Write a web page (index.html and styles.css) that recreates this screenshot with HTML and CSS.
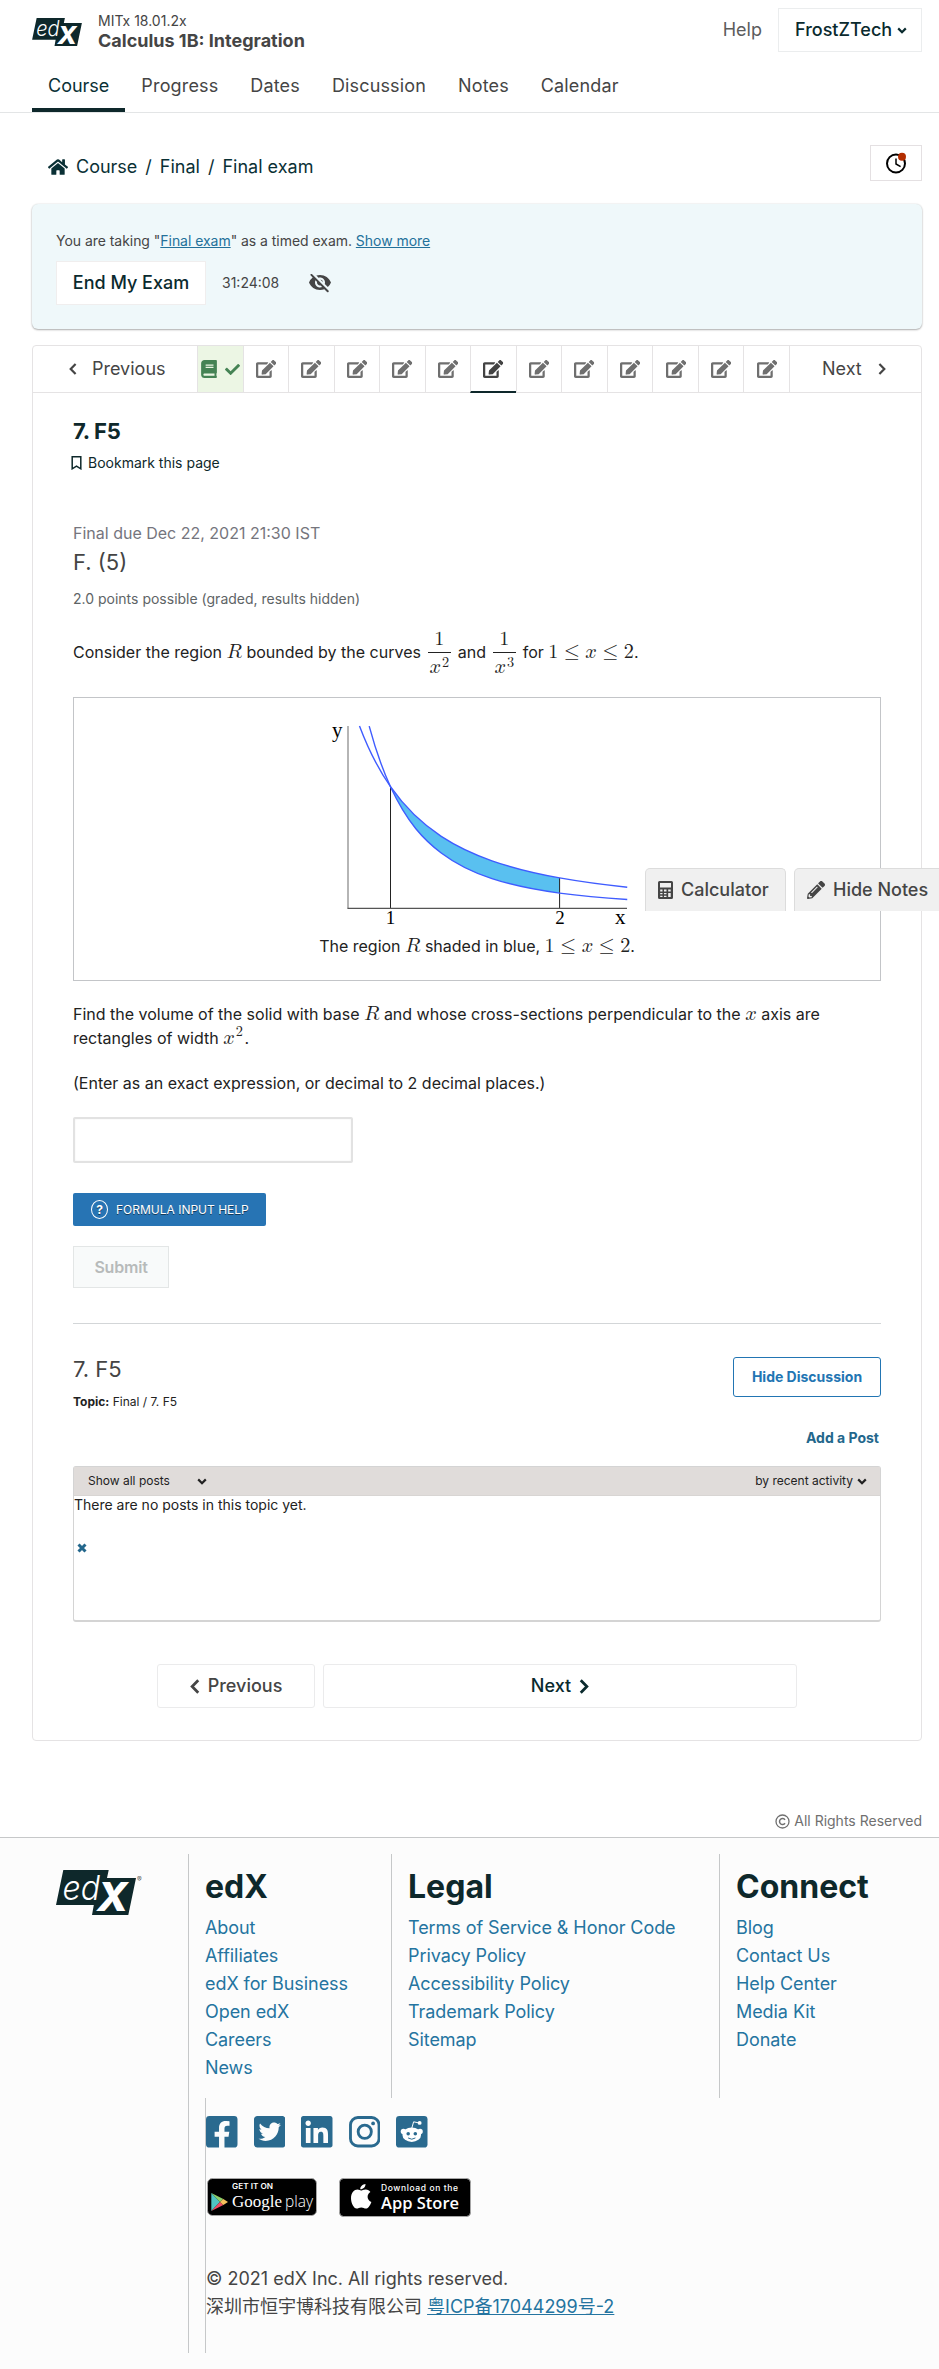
FILE: index.html
```html
<!DOCTYPE html>
<html lang="en">
<head>
<meta charset="utf-8">
<title>7. F5 | Calculus 1B: Integration | edX</title>
<link rel="stylesheet" href="styles.css">
</head>
<body>
<svg class="defs" width="0" height="0" aria-hidden="true">
  <symbol id="edit" viewBox="0 0 576 512"><path d="M402.6 83.2l90.2 90.2c3.8 3.8 3.8 10 0 13.8L274.4 405.6l-92.8 10.3c-12.4 1.4-22.9-9.1-21.5-21.5l10.3-92.8L388.8 83.2c3.8-3.8 10-3.8 13.8 0zm162-22.9l-48.8-48.8c-15.2-15.2-39.9-15.2-55.2 0l-35.4 35.4c-3.8 3.8-3.8 10 0 13.8l90.2 90.2c3.8 3.8 10 3.8 13.8 0l35.4-35.4c15.2-15.3 15.2-40 0-55.2zM384 346.2V448H64V128h229.8c3.2 0 6.2-1.3 8.5-3.5l40-40c7.6-7.6 2.2-20.5-8.5-20.5H48C21.5 64 0 85.5 0 112v352c0 26.5 21.5 48 48 48h352c26.5 0 48-21.5 48-48V306.2c0-10.7-12.9-16-20.5-8.5l-40 40c-2.2 2.3-3.5 5.3-3.5 8.5z"/></symbol>
  <symbol id="chev-left" viewBox="0 0 8 12"><path class="stroke" d="M6.6 1 1.7 6l4.9 5"/></symbol>
  <symbol id="chev-right" viewBox="0 0 8 12"><path class="stroke" d="M1.4 1 6.3 6l-4.9 5"/></symbol>
  <symbol id="chev-down" viewBox="0 0 10 7"><path class="stroke" d="M1.2 1.4 5 5.2l3.8-3.8"/></symbol>
</svg>

<header class="header">
  <div class="topbar">
    <svg class="logo" width="50" height="28" viewBox="0 0 80 45">
      <path class="logo-bg" d="M7.3 0H52.7L51 8H80L72.3 45H36L37.8 35H0Z"/>
      <text class="logo-ed" x="6.5" y="29.7" textLength="37.5" lengthAdjust="spacingAndGlyphs">ed</text>
      <text class="logo-x" x="41" y="41" textLength="31" lengthAdjust="spacingAndGlyphs">X</text>
    </svg>
    <div class="course">
      <div class="org">MITx 18.01.2x</div>
      <div class="title">Calculus 1B: Integration</div>
    </div>
    <a class="help">Help</a>
    <button class="user">FrostZTech <svg class="ic" width="10" height="7"><use href="#chev-down"/></svg></button>
  </div>
  <nav class="tabs">
    <a class="tab active">Course</a><a class="tab">Progress</a><a class="tab">Dates</a><a class="tab">Discussion</a><a class="tab">Notes</a><a class="tab">Calendar</a>
  </nav>
</header>

<main class="main">
  <div class="crumb-row">
    <div class="crumbs">
      <svg class="ic" width="20" height="18" viewBox="0 0 576 512"><path d="M280.37 148.26L96 300.11V464a16 16 0 0 0 16 16l112.06-.29a16 16 0 0 0 15.92-16V368a16 16 0 0 1 16-16h64a16 16 0 0 1 16 16v95.64a16 16 0 0 0 16 16.05L464 480a16 16 0 0 0 16-16V300L295.67 148.26a12.19 12.19 0 0 0-15.3 0zM571.6 251.47L488 182.56V44.05a12 12 0 0 0-12-12h-56a12 12 0 0 0-12 12v72.61L318.47 43a48 48 0 0 0-61 0L4.34 251.47a12 12 0 0 0-1.6 16.9l25.5 31A12 12 0 0 0 45.15 301l235.22-193.74a12.19 12.19 0 0 1 15.3 0L530.9 301a12 12 0 0 0 16.9-1.6l25.5-31a12 12 0 0 0-1.7-16.93z"/></svg>
      <a>Course</a><span>/</span><a>Final</a><span>/</span><a>Final exam</a>
    </div>
    <button class="clock"><svg width="24" height="24" viewBox="0 0 24 24"><circle cx="12" cy="12.5" r="9" fill="none" stroke="#000" stroke-width="2"/><path d="M12 7.5v5.5l4.6 2.7" fill="none" stroke="#000" stroke-width="1.5"/><circle cx="18" cy="5.7" r="4" fill="#b32d00"/></svg></button>
  </div>

  <section class="alert">
    <div class="alert-text">You are taking "<a>Final exam</a>" as a timed exam. <a>Show more</a></div>
    <div class="alert-row">
      <button class="end">End My Exam</button>
      <span class="timer">31:24:08</span>
      <svg class="eye" width="22" height="19" viewBox="1 3 22 19"><path d="M12 6.5c2.76 0 5 2.24 5 5 0 .51-.1 1-.24 1.46l3.06 3.06c1.39-1.23 2.49-2.77 3.18-4.53C21.27 7.11 17 4 12 4c-1.27 0-2.49.2-3.64.57l2.17 2.17c.47-.14.96-.24 1.47-.24zM2.71 3.16a.996.996 0 000 1.41l1.97 1.97A11.892 11.892 0 001 11.5C2.73 15.89 7 19 12 19c1.52 0 2.97-.3 4.31-.82l2.72 2.72a.996.996 0 101.41-1.41L4.13 3.16c-.39-.39-1.03-.39-1.42 0zM12 16.5c-2.76 0-5-2.24-5-5 0-.77.18-1.5.49-2.14l1.57 1.57c-.03.18-.06.37-.06.57 0 1.66 1.34 3 3 3 .2 0 .38-.03.57-.07L14.14 16c-.65.32-1.37.5-2.14.5zm2.97-5.33a2.97 2.97 0 00-2.64-2.64l2.64 2.64z"/></svg>
    </div>
  </section>

  <section class="card">
    <nav class="seq">
      <a class="seq-prev"><svg class="ic" width="8" height="12"><use href="#chev-left"/></svg><span>Previous</span></a>
      <div class="seq-tabs">
        <a class="done"><svg width="16" height="18" viewBox="0 0 448 512"><path d="M448 360V24c0-13.3-10.7-24-24-24H96C43 0 0 43 0 96v320c0 53 43 96 96 96h328c13.3 0 24-10.7 24-24v-16c0-7.5-3.5-14.3-8.9-18.7-4.2-15.4-4.2-59.3 0-74.7 5.4-4.3 8.9-11.1 8.9-18.6zM128 134c0-3.3 2.7-6 6-6h212c3.3 0 6 2.7 6 6v20c0 3.3-2.7 6-6 6H134c-3.3 0-6-2.7-6-6v-20zm0 64c0-3.3 2.7-6 6-6h212c3.3 0 6 2.7 6 6v20c0 3.3-2.7 6-6 6H134c-3.3 0-6-2.7-6-6v-20zm253.4 250H96c-17.7 0-32-14.3-32-32 0-17.6 14.4-32 32-32h285.4c-1.9 17.1-1.9 46.9 0 64z"/></svg><svg width="15" height="15" viewBox="0 0 512 512"><path d="M173.9 439.4l-166.4-166.4c-10-10-10-26.2 0-36.2l36.2-36.2c10-10 26.2-10 36.2 0L192 312.7 432.1 72.6c10-10 26.2-10 36.2 0l36.2 36.2c10 10 10 26.2 0 36.2l-294.4 294.4c-10 10-26.2 10-36.2 0z"/></svg></a>
        <a><svg class="e"><use href="#edit"/></svg></a><a><svg class="e"><use href="#edit"/></svg></a><a><svg class="e"><use href="#edit"/></svg></a><a><svg class="e"><use href="#edit"/></svg></a><a><svg class="e"><use href="#edit"/></svg></a><a class="current"><svg class="e"><use href="#edit"/></svg></a><a><svg class="e"><use href="#edit"/></svg></a><a><svg class="e"><use href="#edit"/></svg></a><a><svg class="e"><use href="#edit"/></svg></a><a><svg class="e"><use href="#edit"/></svg></a><a><svg class="e"><use href="#edit"/></svg></a><a><svg class="e"><use href="#edit"/></svg></a>
      </div>
      <a class="seq-next"><span>Next</span><svg class="ic" width="8" height="12"><use href="#chev-right"/></svg></a>
    </nav>

    <div class="content">
      <h1 class="unit">7. F5</h1>
      <a class="bookmark"><svg width="11" height="14" viewBox="0 0 11 14"><path d="M1.2.8h8.6v12L5.5 10.2 1.2 12.8z" fill="none" stroke="currentColor" stroke-width="1.5"/></svg>Bookmark this page</a>

      <div class="due">Final due Dec 22, 2021 21:30 IST</div>
      <h3 class="problem">F. (5)</h3>
      <div class="points">2.0 points possible (graded, results hidden)</div>
      <p class="statement">Consider the region <span class="m">𝑅</span> bounded by the curves <span class="frac"><span class="num"><span class="m">1</span></span><span class="den"><span class="m">𝑥</span><span class="m sup">2</span></span></span> and <span class="frac"><span class="num"><span class="m">1</span></span><span class="den"><span class="m">𝑥</span><span class="m sup">3</span></span></span> for <span class="m">1<i class="rel">≤</i>𝑥<i class="rel">≤</i>2</span>.</p>

      <div class="figure">
        <svg class="graph" width="300" height="200" viewBox="0 0 300 200">
          <!-- Curves are in plot units: one unit is 169.1 by 121.6 px -->
          <g transform="matrix(169.1 0 0 -121.6 -105.6 182.3)">
            <path fill="#59c0f0" d="M1 1C1.1 .8 1.2 .6827 1.3 .5917C1.4 .5007 1.5 .4394 1.6 .3906C1.7333 .3255 1.8667 .2833 2 .25V.125C1.8667 .15 1.7333 .1831 1.6 .2441C1.5 .2899 1.4 .3502 1.3 .4552C1.2 .5602 1.1 .7 1 1Z"/>
            <path class="axis" d="M1 1V0M2 .25V0"/>
            <path class="curve" d="M.8166 1.4996C.8777 1.2751 .9389 1.1222 1 1C1.1 .8 1.2 .6827 1.3 .5917C1.4 .5007 1.5 .4394 1.6 .3906C1.7333 .3255 1.8667 .2833 2 .25C2.1333 .2167 2.2667 .1929 2.4 .1736"/>
            <path class="curve" d="M.874 1.4978C.916 1.2819 .958 1.126 1 1C1.1 .7 1.2 .5602 1.3 .4552C1.4 .3502 1.5 .2899 1.6 .2441C1.7333 .1831 1.8667 .15 2 .125C2.1333 .1 2.2667 .0844 2.4 .0723"/>
          </g>
          <path d="M21 0V182.5" fill="none" stroke="#a3a3a3" stroke-width="1.6"/>
          <path d="M20.5 182.4H300" fill="none" stroke="#555" stroke-width="1.1"/>
          <text class="lbl" x="5" y="11">y</text>
          <text class="lbl num-lbl" x="63.5" y="198" text-anchor="middle">1</text>
          <text class="lbl num-lbl" x="233" y="198" text-anchor="middle">2</text>
          <text class="lbl" x="288" y="198">x</text>
        </svg>
        <div class="caption">The region <span class="m">𝑅</span> shaded in blue, <span class="m">1<i class="rel">≤</i>𝑥<i class="rel">≤</i>2</span>.</div>
      </div>

      <p class="ask">Find the volume of the solid with base <span class="m">𝑅</span> and whose cross-sections perpendicular to the <span class="m">𝑥</span> axis are rectangles of width <span class="m">𝑥</span><span class="m sup">2</span>.</p>
      <p class="enter">(Enter as an exact expression, or decimal to 2 decimal places.)</p>
      <input class="answer" type="text">
      <button class="formula"><span class="q">?</span>FORMULA INPUT HELP</button>
      <button class="submit">Submit</button>
      <hr class="rule">

      <div class="disc-head">
        <div>
          <h3 class="disc-title">7. F5</h3>
          <div class="topic"><b>Topic:</b> Final / 7. F5</div>
        </div>
        <button class="hide-disc">Hide Discussion</button>
      </div>
      <a class="add-post">Add a Post</a>
      <div class="posts">
        <div class="posts-bar">
          <span class="filter">Show all posts <svg class="ic" width="10" height="7"><use href="#chev-down"/></svg></span>
          <span class="sort">by recent activity <svg class="ic" width="10" height="7"><use href="#chev-down"/></svg></span>
        </div>
        <div class="none">There are no posts in this topic yet.</div>
        <svg class="close" width="10" height="10" viewBox="0 0 10 10"><path d="M1.5 1.5 8.5 8.5M8.5 1.5 1.5 8.5" stroke="#23678c" stroke-width="3"/></svg>
      </div>
      <div class="pager">
        <a class="pg prev"><svg class="ic" width="10" height="15"><use href="#chev-left"/></svg>Previous</a>
        <a class="pg next">Next<svg class="ic" width="10" height="15"><use href="#chev-right"/></svg></a>
      </div>
    </div>
  </section>
  <div class="rights"><svg width="15" height="15" viewBox="0 0 15 15"><g fill="none" stroke="currentColor"><circle cx="7.5" cy="7.5" r="6.5" stroke-width="1.3"/><path d="M10 5.8A3 3 0 1 0 10 9.2" stroke-width="1.5"/></g></svg>All Rights Reserved</div>
</main>

<div class="tools">
  <button class="tool calc"><svg width="15" height="18" viewBox="0 0 15 18"><path fill-rule="evenodd" d="M1.5 0h12A1.5 1.5 0 0 1 15 1.5v15a1.5 1.5 0 0 1-1.5 1.5h-12A1.5 1.5 0 0 1 0 16.5v-15A1.5 1.5 0 0 1 1.5 0zM2 2v4.5h11V2zM2.2 8.5v2h2.3v-2zM6 8.5v2h2.5v-2zM10.2 8.5v2h2.5v-2zM2.2 12v1.3h2.3V12zM6 12v1.3h2.5V12zM2.2 14.7v1.3h2.3v-1.3zM6 14.7v1.3h2.5v-1.3zM10.2 12v4h2.5v-4z"/></svg>Calculator</button>
  <button class="tool notes"><svg width="18" height="18" viewBox="0 0 512 512"><path d="M497.9 142.1l-46.1 46.1c-4.7 4.7-12.3 4.7-17 0l-111-111c-4.7-4.7-4.7-12.3 0-17l46.1-46.1c18.7-18.7 49.1-18.7 67.9 0l60.1 60.1c18.8 18.7 18.8 49.1 0 67.9zM284.2 99.8L21.6 362.4.4 483.9c-2.9 16.4 11.4 30.6 27.8 27.8l121.5-21.3 262.6-262.6c4.7-4.7 4.7-12.3 0-17l-111-111c-4.8-4.7-12.4-4.7-17.1 0zM124.1 339.9c-5.5-5.5-5.5-14.3 0-19.8l154-154c5.5-5.5 14.3-5.5 19.8 0s5.5 14.3 0 19.8l-154 154c-5.5 5.5-14.3 5.5-19.8 0zM88 424h48v36.3l-64.5 11.3-31.1-31.1L51.7 376H88v48z"/></svg>Hide Notes</button>
</div>

<footer class="footer">
  <div class="foot-logo">
    <svg width="80" height="45" viewBox="0 0 80 45">
      <path class="logo-bg" d="M7.3 0H52.7L51 8H80L72.3 45H36L37.8 35H0Z"/>
      <text class="logo-ed" x="6.5" y="29.7" textLength="37.5" lengthAdjust="spacingAndGlyphs">ed</text>
      <text class="logo-x" x="41" y="41" textLength="31" lengthAdjust="spacingAndGlyphs">X</text>
    </svg>
    <span>®</span>
  </div>
  <div class="foot-body">
    <div class="cols">
      <div class="col"><h2>edX</h2><a>About</a><a>Affiliates</a><a>edX for Business</a><a>Open edX</a><a>Careers</a><a>News</a></div>
      <div class="col"><h2>Legal</h2><a>Terms of Service &amp; Honor Code</a><a>Privacy Policy</a><a>Accessibility Policy</a><a>Trademark Policy</a><a>Sitemap</a></div>
      <div class="col"><h2>Connect</h2><a>Blog</a><a>Contact Us</a><a>Help Center</a><a>Media Kit</a><a>Donate</a></div>
    </div>
    <div class="lower">
      <div class="social">
        <svg viewBox="0 32 448 448"><path d="M400 32H48A48 48 0 0 0 0 80v352a48 48 0 0 0 48 48h137.25V327.69h-63V256h63v-54.64c0-62.15 37-96.48 93.67-96.48 27.14 0 55.52 4.84 55.52 4.84v61h-31.27c-30.81 0-40.42 19.12-40.42 38.73V256h68.78l-11 71.69h-57.78V480H400a48 48 0 0 0 48-48V80a48 48 0 0 0-48-48z"/></svg>
        <svg viewBox="0 32 448 448"><path d="M400 32H48C21.5 32 0 53.5 0 80v352c0 26.5 21.5 48 48 48h352c26.5 0 48-21.5 48-48V80c0-26.5-21.5-48-48-48zm-48.9 158.8c.2 2.8.2 5.7.2 8.5 0 86.7-66 186.6-186.6 186.6-37.2 0-71.7-10.8-100.7-29.4 5.3.6 10.4.8 15.8.8 30.7 0 58.9-10.4 81.4-28-28.8-.6-53-19.5-61.3-45.5 10.1 1.5 19.2 1.5 29.6-1.2-30-6.1-52.5-32.5-52.5-64.4v-.8c8.7 4.9 18.9 7.9 29.6 8.3a65.447 65.447 0 0 1-29.2-54.6c0-12.2 3.2-23.4 8.9-33.1 32.3 39.8 80.8 65.8 135.2 68.6-9.3-44.5 24-80.6 64-80.6 18.9 0 35.9 7.9 47.9 20.7 14.8-2.8 29-8.3 41.6-15.8-4.9 15.2-15.2 28-28.8 36.1 13.2-1.4 26-5.1 37.8-10.2-8.9 13.1-20.1 24.7-32.9 34z"/></svg>
        <svg viewBox="0 32 448 448"><path d="M416 32H31.9C14.3 32 0 46.5 0 64.3v383.4C0 465.5 14.3 480 31.9 480H416c17.6 0 32-14.5 32-32.3V64.3c0-17.8-14.4-32.3-32-32.3zM135.4 416H69V202.2h66.5V416zm-33.2-243c-21.3 0-38.5-17.3-38.5-38.5S80.9 96 102.2 96c21.2 0 38.5 17.3 38.5 38.5 0 21.3-17.2 38.5-38.5 38.5zm282.1 243h-66.4V312c0-24.8-.5-56.7-34.5-56.7-34.6 0-39.9 27-39.9 54.9V416h-66.4V202.2h63.7v29.2h.9c8.9-16.8 30.6-34.5 62.9-34.5 67.2 0 79.7 44.3 79.7 101.9V416z"/></svg>
        <svg viewBox="0 0 32 32"><g fill="none" stroke="#2a6a8f" stroke-width="2.9"><rect x="1.5" y="1.5" width="29" height="29" rx="7.5"/><circle cx="16" cy="16" r="6.7"/></g><circle cx="24.5" cy="7.5" r="1.9"/></svg>
        <svg viewBox="0 0 32 32"><rect width="32" height="32" rx="3.4"/><g fill="#fff"><circle cx="7.5" cy="15.7" r="2.7"/><circle cx="24.5" cy="15.7" r="2.7"/><ellipse cx="16" cy="19" rx="9.5" ry="7.3"/><circle cx="24" cy="7" r="2"/></g><path d="M16 12.5 17.9 5.9 23.5 7.1" fill="none" stroke="#fff" stroke-width="1"/><circle cx="12.4" cy="18" r="1.8"/><circle cx="19.6" cy="18" r="1.8"/><path d="M12.3 22.3Q16 24.9 19.7 22.3" fill="none" stroke="#2a6a8f" stroke-width="1"/></svg>
      </div>
      <div class="badges">
        <svg width="110" height="38" viewBox="0 0 110 38">
          <rect x=".5" y=".5" width="109" height="37" rx="5" fill="#000" stroke="#a6a6a6"/>
          <path d="M4.3 15V33L13 24z" fill="#4fc4c4"/><path d="M4.3 15 13 24 16.3 21z" fill="#8ccf6a"/><path d="M4.3 33 13 24 16.3 27z" fill="#ee4b63"/><path d="M16.3 21 13 24l3.3 3 4.7-3z" fill="#f6c15c"/>
          <text x="25" y="11" class="b-small" textLength="41" lengthAdjust="spacingAndGlyphs">GET IT ON</text>
          <text x="25" y="29" class="b-goo" textLength="50" lengthAdjust="spacingAndGlyphs">Google</text>
          <text x="78" y="29" class="b-play" textLength="28" lengthAdjust="spacingAndGlyphs">play</text>
        </svg>
        <svg width="132" height="39" viewBox="0 0 132 39">
          <rect x=".5" y=".5" width="131" height="38" rx="4" fill="#000" stroke="#a6a6a6"/>
          <path fill="#fff" d="M26.5 6c.2 2.9-2.5 5.5-5.2 5.3C21 8.6 23.7 6.1 26.5 6zM22 12.6c1 0 2.6-1.3 4.8-1.2 2 .1 3.600 1 4.600 2.500-4.200 2.600-3.500 8.300 1 10-1 2.700-3 6.600-5.400 6.700-1.900 0-2.500-1.100-4.700-1.100s-2.900 1.100-4.700 1.100C15 30.700 12 25.300 12 20.300c0-5.500 3.300-8.700 6.500-8.700 1.600 0 2.700 1 3.500 1z"/>
          <text x="42" y="13" class="b-dl" textLength="77">Download on the</text>
          <text x="42" y="31" class="b-app" textLength="78" lengthAdjust="spacingAndGlyphs">App Store</text>
        </svg>
      </div>
      <div class="legal">© 2021 edX Inc. All rights reserved.<br>深圳市恒宇博科技有限公司 <a>粤ICP备17044299号-2</a></div>
    </div>
  </div>
</footer>
</body>
</html>
```
FILE: styles.css
```css
* { box-sizing: border-box; }
body {
  margin: 0;
  position: relative;
  width: 939px;
  overflow-x: hidden;
  background: #fff;
  color: #454545;
  font: 400 18px/28px Inter, "Noto Sans CJK SC", sans-serif;
}
h1, h2, h3, p { margin: 0; font-weight: 400; }
button { font: inherit; color: inherit; padding: 0; margin: 0; border: 0; background: none; }
svg { display: block; fill: currentColor; flex: none; }
.defs { position: absolute; }
.stroke { fill: none; stroke: currentColor; stroke-width: 2.2; }
.logo, .foot-logo svg { overflow: visible; }
.logo-bg { fill: #0e282b; }
.logo-ed { font: italic 300 34px Inter, sans-serif; fill: #fff; }
.logo-x { font: italic 800 39px Inter, sans-serif; fill: #fff; }

/* header */
.header { border-bottom: 1px solid #e3e5e6; height: 113px; }
.topbar { display: flex; align-items: center; height: 60px; padding: 0 17px 0 32px; }
.logo { margin-top: 4px; }
.course { margin: 1px auto 0 16px; }
.org { font-size: 14px; line-height: 21px; }
.title { font-weight: 700; line-height: 20px; }
.help { margin-right: 16px; color: #5c5c5c; }
.user {
  display: flex; align-items: center; gap: 5px;
  width: 144px; height: 44px; padding-left: 16px;
  border: 1px solid #ebedee; color: #0a2a2e; font-weight: 500;
}
.user .stroke { stroke-width: 2.4; }
.tabs { display: flex; padding-left: 32px; }
.tab { height: 52px; padding: 12px 16px 0; border-bottom: 4px solid transparent; letter-spacing: .15px; }
.tab.active { color: #0a3035; border-color: #0e282b; letter-spacing: 0; }

/* breadcrumb */
.main { padding: 32px 17px 0 32px; }
.crumb-row { display: flex; justify-content: space-between; height: 36px; }
.crumbs { display: flex; align-items: center; gap: 8px; padding: 8px 0 0 16px; height: 36px; color: #0a3035; }
.clock { display: grid; place-items: center; width: 52px; height: 36px; border: 1px solid #e4e0e2; }

/* exam banner */
.alert {
  height: 125px; margin-top: 23px; padding: 23px 24px 0;
  background: #eff8fa; border-radius: 6px;
  box-shadow: 0 1px 2px rgba(0, 0, 0, .3), 0 0 2px rgba(0, 0, 0, .12);
}
.alert-text { font-size: 14px; letter-spacing: -.04px; }
.alert a { color: #23719a; text-decoration: underline; }
.alert-row { display: flex; align-items: center; margin-top: 6px; }
.end { width: 150px; height: 44px; background: #fff; border: 1px solid #f0eeee; font-weight: 500; color: #0a2a2e; }
.timer { margin-left: 16px; font-size: 14px; width: 87px; }

/* sequence card */
.card { margin-top: 16px; border: 1px solid #e5e3e4; border-radius: 4px; }
.seq { display: flex; height: 47px; border-bottom: 1px solid #e5e3e4; }
.seq-prev { display: flex; align-items: center; width: 164px; padding-left: 36px; gap: 15px; }
.seq-next { display: flex; align-items: center; flex: 1; padding-left: 32px; gap: 16px; border-left: 1px solid #e5e3e4; }
.seq-tabs { display: grid; grid-template-columns: repeat(13, 1fr); width: 592px; color: #6f6f6f; }
.seq-tabs a { display: grid; place-items: center; border-left: 1px solid #e5e3e4; height: 46px; }
.seq-tabs .e { width: 20.25px; height: 18px; }
.seq-tabs .done { display: flex; justify-content: space-between; padding: 0 3px; background: #ecf6e4; color: #458354; }
.seq-tabs .current { height: 47px; border-bottom: 2px solid #0e282b; color: #434343; }

.content { padding: 24px 40px 32px; }
.unit { font-size: 22px; line-height: 28px; font-weight: 700; color: #0e282b; letter-spacing: -.3px; }
.bookmark { display: flex; align-items: center; gap: 6px; margin: 8px 0 0 -2px; font-size: 14px; line-height: 20px; color: #0e282b; }
.due { margin-top: 48px; font-size: 16px; line-height: 24px; color: #75757d; }
.problem { margin-top: 2px; font-size: 22px; line-height: 30px; color: #444; }
.points { margin-top: 12px; font-size: 14px; line-height: 20px; color: #5e6466; }
.statement, .caption, .ask, .enter { font-size: 16px; line-height: 24px; color: #222; }
.statement { margin-top: 20px; height: 50px; }

/* inline maths */
.m { font: 20.2px/0 "Latin Modern Math", "Liberation Serif", serif; white-space: nowrap; }
.rel { font-style: normal; padding: 0 .278em; }
.m.sup { font-size: 14.3px; position: relative; top: -8px; margin: 0 1.5px 0 1px; }
.frac { display: inline-flex; flex-direction: column; vertical-align: middle; width: 23px; margin: 0 2.4px 2px; text-align: center; line-height: 20px; }
.num { height: 24px; border-bottom: 1px solid #222; }
.den { height: 24px; padding-top: 4px; }
.den .m.sup { top: -6px; margin-right: 0; }

.figure { height: 284px; margin-top: 18px; padding-top: 28px; border: 1px solid #c3c5c8; }
.graph { margin: 0 auto; overflow: visible; }
.curve { fill: none; stroke: #3f5cff; stroke-width: 1.4; vector-effect: non-scaling-stroke; }
.axis { fill: none; stroke: #222; stroke-width: 1; vector-effect: non-scaling-stroke; }
.lbl { font: 21px "Liberation Serif", serif; fill: #000; }
.num-lbl { font-size: 19px; }
.caption { margin-top: 8px; text-align: center; }
.ask { margin-top: 21px; }
.enter { margin-top: 21px; }
.answer { display: block; width: 280px; height: 46px; margin-top: 22px; border: 2px solid #e2e2e2; border-radius: 2px; box-shadow: inset 0 0 2px #eee; }
.formula {
  display: flex; align-items: center; gap: 8px; width: 193px; height: 33px; margin-top: 30px; padding-left: 18px;
  background: #2774b4; border-radius: 2px; color: #fff; font-size: 12px; line-height: 14px; text-shadow: 0 1px 0 #133a5a;
}
.q { display: grid; place-items: center; width: 17px; height: 19px; border: 1.5px solid #fff; border-radius: 50%; font-weight: 700; }
.submit { display: block; width: 96px; height: 42px; margin-top: 20px; border: 1px solid #e3e6e6; background: #f8fafa; color: #b7baba; font-size: 16px; font-weight: 600; letter-spacing: -.2px; }
.rule { margin: 35px 0 0; height: 1px; border: 0; background: #d3d6d8; }

/* discussion */
.disc-head { display: flex; justify-content: space-between; padding-top: 30px; }
.disc-title { font-size: 22px; line-height: 30px; color: #444; }
.topic { margin-top: 8px; font-size: 12px; line-height: 20px; color: #222; }
.hide-disc { width: 148px; height: 40px; margin-top: 3px; border: 1px solid #2275b3; border-radius: 3px; color: #2275b3; font-size: 14px; font-weight: 700; }
.add-post { display: block; margin-top: 16px; padding-right: 2px; text-align: right; font-size: 14px; line-height: 20px; font-weight: 700; color: #23678c; }
.posts { height: 156px; margin-top: 18px; border: 1px solid #d4d4d4; border-bottom-width: 2px; border-radius: 3px; }
.posts-bar { display: flex; justify-content: space-between; height: 29px; padding: 0 13px 0 14px; background: #e0dcda; border-bottom: 1px solid #d8d5d3; font-size: 12px; color: #222; }
.filter, .sort { display: flex; align-items: center; gap: 4px; }
.filter { gap: 27px; }
.none { font-size: 14px; line-height: 20px; color: #222; margin-top: -1px; }
.close { margin: 28px 0 0 3px; }

.pager { display: flex; gap: 8px; margin: 42px 84px 0; }
.pg { display: flex; align-items: center; justify-content: center; gap: 8px; height: 44px; border: 1px solid #ebebec; border-radius: 3px; font-weight: 500; }
.prev { width: 158px; }
.next { flex: 1; color: #0a2a2e; }
.rights { display: flex; justify-content: flex-end; align-items: center; gap: 4px; margin: 70px 0 6px; font-size: 14px; line-height: 20px; color: #707070; }

/* bottom tool tabs, float over the figure */
.tools { position: absolute; left: 645px; right: 0; top: 868px; display: flex; gap: 8px; overflow: hidden; }
.tool { display: flex; align-items: center; flex: none; gap: 8px; height: 43px; padding-left: 12px; background: #f0f0f0; border: 1px solid #dcdcdc; border-bottom: 0; border-radius: 5px 5px 0 0; font-weight: 500; }
.calc { width: 141px; }
.notes { width: 160px; }

/* footer */
.footer { display: grid; grid-template-columns: 188px 1fr; padding: 16px 0; border-top: 1px solid #c6c8c9; background: #fcfcfc; }
.foot-logo { display: flex; padding: 16px 0 0 56px; }
.foot-logo span { font-size: 7px; line-height: 20px; color: #555; margin-left: 1px; }
.foot-body { border-left: 1px solid #c6c8c9; padding-left: 16px; }
.cols { display: grid; grid-template-columns: 186px 328px 1fr; height: 244px; }
.col { padding-top: 13px; }
.col + .col { border-left: 1px solid #c6c8c9; padding-left: 16px; }
.col h2 { margin-bottom: 7px; font-size: 32px; line-height: 40px; font-weight: 700; color: #0e282b; }
.col a { display: block; color: #2474a0; letter-spacing: -.07px; }
.lower { height: 255px; padding-top: 18px; border-left: 1px solid #c6c8c9; }
.social { display: flex; gap: 16px; color: #2a6a8f; }
.social svg { width: 31.5px; height: 31.5px; }
.badges { display: flex; gap: 22px; align-items: center; margin: 30px 0 0 1px; }
.badges text { fill: #fff; }
.b-small { font: 600 7.5px Inter, sans-serif; }
.b-goo { font: 17px "Liberation Serif", serif; }
.b-play { font: 300 16px "Open Sans", sans-serif; }
.b-dl { font: 500 8.5px Inter, sans-serif; }
.b-app { font: 600 17px "Open Sans", sans-serif; }
.legal { margin-top: 48px; }
.legal a { color: #2474a0; text-decoration: underline; }
```
